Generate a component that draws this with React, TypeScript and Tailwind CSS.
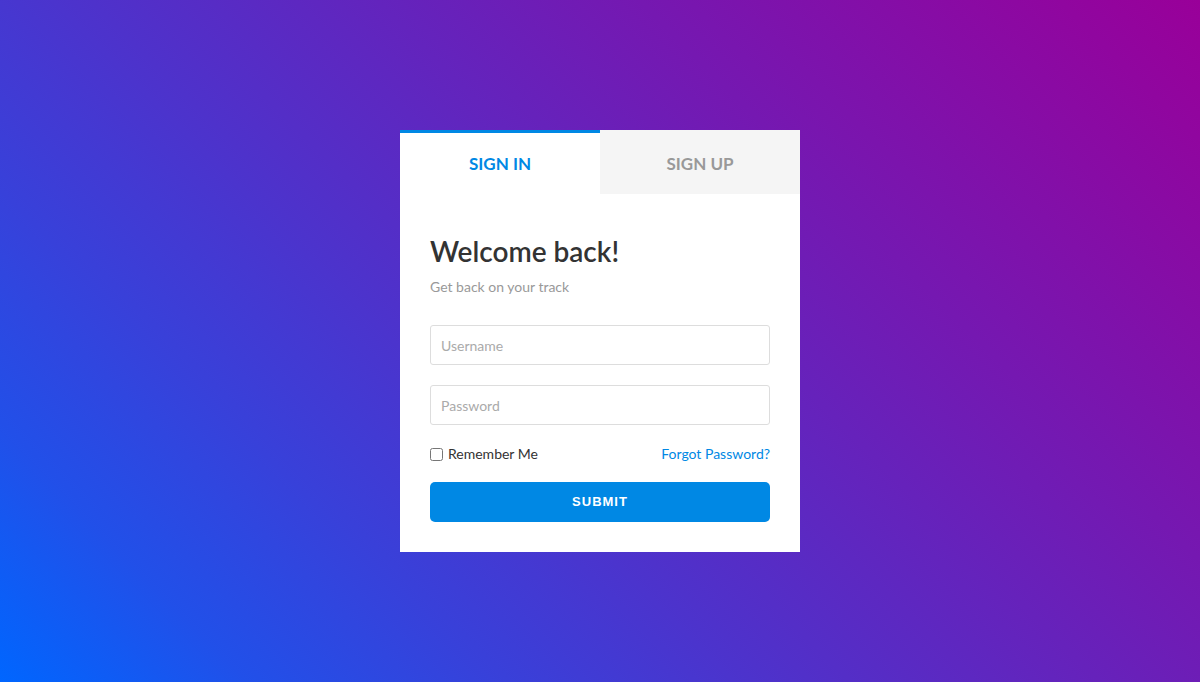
import { useState } from "react";
import type { FC } from "react";

// ─── LoginCard ────────────────────────────────────────────────────────────────

type Tab = "signin" | "signup";

const LoginCard: FC = () => {
  const [tab, setTab] = useState<Tab>("signin");
  const [remember, setRemember] = useState<boolean>(false);

  return (
    <div className="w-[400px] bg-white font-['Lato','Open_Sans',sans-serif]">
      {/* Tabs */}
      <div className="flex h-16">
        <button
          onClick={() => setTab("signin")}
          className={`flex-1 flex items-center justify-center border-t-[3px] text-[17px] font-bold ${
            tab === "signin"
              ? "border-[#0088e4] bg-white text-[#0088e4]"
              : "border-transparent bg-[#f5f5f5] text-[#999]"
          }`}
        >
          SIGN IN
        </button>
        <button
          onClick={() => setTab("signup")}
          className={`flex-1 flex items-center justify-center border-t-[3px] text-[17px] font-bold ${
            tab === "signup"
              ? "border-[#0088e4] bg-white text-[#0088e4]"
              : "border-transparent bg-[#f5f5f5] text-[#999]"
          }`}
        >
          SIGN UP
        </button>
      </div>

      {/* Form */}
      <form
        className="flex flex-col px-[30px] pt-10 pb-[30px]"
        onSubmit={(e) => e.preventDefault()}
      >
        <h1 className="text-[28px] leading-[34px] font-semibold text-[#333]">
          Welcome back!
        </h1>
        <p className="mt-[9px] text-sm leading-5 text-[#999]">
          Get back on your track
        </p>

        <input
          type="text"
          placeholder="Username"
          className="mt-7 h-10 rounded-[3px] border border-[#ddd] px-[10px] text-sm text-[#333] placeholder:text-[#aaa] outline-none focus:border-[#0088e4]"
        />
        <input
          type="password"
          placeholder="Password"
          className="mt-5 h-10 rounded-[3px] border border-[#ddd] px-[10px] text-sm text-[#333] placeholder:text-[#aaa] outline-none focus:border-[#0088e4]"
        />

        <div className="mt-[19px] flex h-5 items-center justify-between text-sm">
          <label className="flex items-center gap-[5px] text-[#333]">
            <input
              type="checkbox"
              checked={remember}
              onChange={() => setRemember((p) => !p)}
              className="m-0 h-[13px] w-[13px]"
            />
            Remember Me
          </label>
          <a href="#" className="text-[#0088e4]">
            Forgot Password?
          </a>
        </div>

        <button
          type="submit"
          className="mt-[18px] h-10 rounded-[5px] bg-[#0088e4] font-['Liberation_Sans',Arial,sans-serif] text-[13px] font-bold tracking-[1px] text-white"
        >
          SUBMIT
        </button>
      </form>
    </div>
  );
};

// ─── App ──────────────────────────────────────────────────────────────────────

const App: FC = () => (
  <div className="flex h-[682px] w-full items-start justify-center bg-[linear-gradient(45deg,#0066ff,40%,#990099)] pt-[130px]">
    <LoginCard />
  </div>
);

export default App;
